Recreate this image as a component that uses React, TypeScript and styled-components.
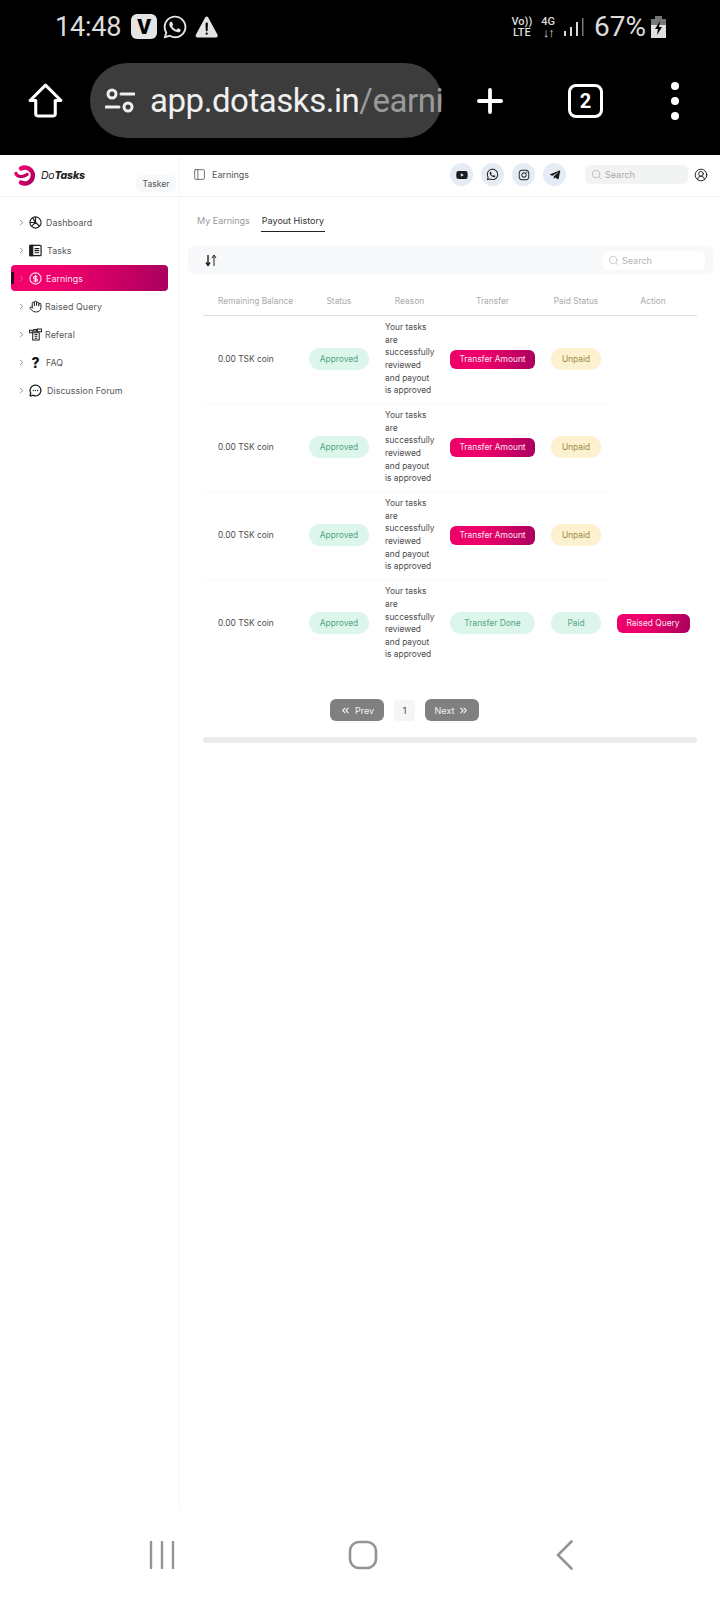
import { createGlobalStyle, styled } from "styled-components"
import type { ReactNode } from "react"
import { ChevronRight, Hand, MessageCircleMore, PanelLeft, Plus, Search, ChevronsLeft, ChevronsRight, CircleUserRound } from "lucide-react"
import { FaInstagram, FaTelegramPlane, FaWhatsapp, FaYoutube } from "react-icons/fa"
import { IoWarning } from "react-icons/io5"

const GlobalStyle = createGlobalStyle`
  html, body { margin: 0; padding: 0; background: #fff; }
  * { box-sizing: border-box; }
`

const Page = styled.div`
  width: 720px;
  height: 1600px;
  display: flex;
  flex-direction: column;
  font-family: Inter, "Noto Sans", sans-serif;
  overflow: hidden;
`

const Chrome = styled.div`
  height: 155px;
  background: #000;
  color: #fff;
  font-family: Roboto, sans-serif;
`
const StatusBar = styled.div`
  height: 63px;
  padding: 0 54px 10px 55px;
  display: flex;
  align-items: center;
  color: #dcdcdc;
`
const Clock = styled.span`
  font-size: 27px;
  letter-spacing: -0.2px;
  margin-right: 10px;
`
const VBadge = styled.span`
  width: 26px;
  height: 25px;
  border-radius: 6px;
  background: #e4e4e4;
  color: #000;
  font-weight: 900;
  font-size: 21px;
  display: flex;
  align-items: center;
  justify-content: center;
  margin-right: 5px;
`
const WarningIcon = styled(IoWarning)`
  margin-left: 5px;
`
const StatusRight = styled.div`
  margin-left: auto;
  display: flex;
  align-items: center;
`
const TinyStack = styled.span`
  display: flex;
  flex-direction: column;
  align-items: center;
  font-size: 11px;
  line-height: 11px;
  font-weight: 500;
  margin-right: 9px;
`
const Arrows = styled.span`
  font-size: 13px;
  font-weight: 700;
  letter-spacing: -1px;
`
const Percent = styled.span`
  font-size: 28px;
  margin: 0 5px 0 10px;
`
const UrlRow = styled.div`
  height: 92px;
  padding: 0 0 17px 27px;
  display: flex;
  align-items: center;
`
const HomeIcon = styled.svg`
  width: 37px;
  height: 37px;
  flex: none;
`
const UrlPill = styled.div`
  width: 352px;
  height: 75px;
  margin-left: 26px;
  border-radius: 38px;
  background: #3c3c3c;
  display: flex;
  align-items: center;
  padding-left: 15px;
  font-size: 33px;
  letter-spacing: -0.45px;
  white-space: nowrap;
  color: #f0f0f0;
`
const UrlFaded = styled.span`
  color: #9a9a9a;
`
const UrlIcon = styled.svg`
  width: 30px;
  height: 30px;
  margin-right: 15px;
  flex: none;
`
const PlusSlot = styled.div`
  margin-left: 29px;
  display: flex;
`
const TabCount = styled.div`
  width: 35px;
  height: 34px;
  margin-left: 59px;
  border: 3px solid #fff;
  border-radius: 8px;
  font-size: 20px;
  font-weight: 700;
  display: flex;
  align-items: center;
  justify-content: center;
`
const Dots = styled.div`
  margin-left: 68px;
  display: flex;
  flex-direction: column;
  gap: 7px;
  span {
    width: 8px;
    height: 8px;
    border-radius: 50%;
    background: #fff;
  }
`

const AppBody = styled.div`
  flex: 1;
  display: flex;
  min-height: 0;
  color: #444;
`
const Sidebar = styled.aside`
  width: 180px;
  flex: none;
  border-right: 1px solid #f5f5f5;
`
const SideHead = styled.div`
  height: 42px;
  border-bottom: 1px solid #f3f3f3;
  padding-left: 14px;
  display: flex;
  align-items: center;
`
const LogoText = styled.span`
  margin-left: 4px;
  font-size: 10.5px;
  font-style: italic;
  font-weight: 400;
  color: #222;
  letter-spacing: -0.2px;
  b { font-weight: 800; }
`
const RolePill = styled.span`
  margin-left: auto;
  margin-right: 3px;
  align-self: flex-end;
  margin-bottom: 4px;
  width: 40px;
  height: 17px;
  border-radius: 5px;
  background: #f7f8fa;
  font-size: 8.5px;
  display: flex;
  align-items: center;
  justify-content: center;
  color: #555;
`
const SideNav = styled.nav`
  padding: 12px 11px 0;
  display: flex;
  flex-direction: column;
  gap: 2px;
`
const NavItem = styled.div<{ $active?: boolean; $gap: number }>`
  position: relative;
  height: 26px;
  padding-left: 6px;
  border-radius: 4px;
  display: flex;
  align-items: center;
  font-size: 8.8px;
  letter-spacing: 0.1px;
  color: ${(p) => (p.$active ? "#fde6f0" : "#555")};
  background: ${(p) => (p.$active ? "linear-gradient(100deg, #f2006b 30%, #a9005f 100%)" : "transparent")};
  svg.chev {
    width: 9px;
    height: 9px;
    margin-right: 3px;
    color: ${(p) => (p.$active ? "#f78cb8" : "#555")};
  }
  .glyph {
    width: 13px;
    height: 13px;
    margin-right: ${(p) => p.$gap}px;
    color: ${(p) => (p.$active ? "#fde6f0" : "#1c1c1c")};
    flex: none;
  }
  ${(p) =>
    p.$active &&
    `&::before {
      content: "";
      position: absolute;
      left: 0;
      top: 7px;
      width: 3px;
      height: 12px;
      background: #3a0a22;
    }`}
`
const Question = styled.span`
  width: 13px;
  margin-right: 4px;
  text-align: center;
  font-size: 14px;
  font-weight: 800;
  color: #111;
`

const Main = styled.main`
  flex: 1;
  min-width: 0;
`
const TopBar = styled.header`
  height: 42px;
  border-bottom: 1px solid #f3f3f3;
  padding: 0 12px 2px 13px;
  display: flex;
  align-items: center;
  font-size: 9px;
  color: #555;
`
const PageTitle = styled.span`
  margin-left: 6px;
  margin-right: auto;
`
const Socials = styled.div`
  display: flex;
  gap: 8px;
  margin-right: 19px;
`
const Social = styled.span`
  width: 23px;
  height: 23px;
  border-radius: 50%;
  background: #e6ecf6;
  color: #1c1c1c;
  display: flex;
  align-items: center;
  justify-content: center;
`
const HeadSearch = styled.div`
  width: 103px;
  height: 19px;
  border-radius: 6px;
  background: #f2f3f3;
  display: flex;
  align-items: center;
  gap: 3px;
  padding-left: 6px;
  color: #aaa;
  font-size: 9px;
  margin-right: 6px;
`
const Tabs = styled.div`
  height: 49px;
  padding: 15px 0 0 16px;
  display: flex;
  gap: 10px;
  font-size: 9px;
`
const Tab = styled.span<{ $active?: boolean }>`
  height: 20px;
  padding: 3px 1px 0;
  color: ${(p) => (p.$active ? "#333" : "#999")};
  border-bottom: ${(p) => (p.$active ? "1px solid #222" : "none")};
`
const Toolbar = styled.div`
  height: 28px;
  margin: 0 7px 0 8px;
  padding: 0 8px 0 17px;
  border-radius: 6px;
  background: #f7f8fa;
  display: flex;
  align-items: center;
  justify-content: space-between;
`
const TableSearch = styled(HeadSearch)`
  background: #fff;
  margin-right: 0;
  color: #b4b4b4;
`
const PayoutTable = styled.table`
  width: 494px;
  margin: 14px 0 0 23px;
  border-collapse: collapse;
  table-layout: fixed;
  font-size: 8.4px;
`
const HeadCell = styled.th<{ $left?: boolean }>`
  height: 27px;
  font-weight: 400;
  color: #aaa;
  text-align: ${(p) => (p.$left ? "left" : "center")};
  padding: 0 0 0 ${(p) => (p.$left ? "15px" : "0")};
  border-bottom: 1px solid #dedede;
`
const Cell = styled.td<{ $left?: boolean; $last?: boolean }>`
  height: 88px;
  padding: 0 0 0 ${(p) => (p.$left ? "15px" : "0")};
  text-align: ${(p) => (p.$left ? "left" : "center")};
  color: #4c4c4c;
  border-bottom: ${(p) => (p.$last ? "none" : "1px solid #f9f9f9")};
`
const ReasonText = styled.div`
  width: 52px;
  margin-left: 8px;
  text-align: left;
  line-height: 12.6px;
`
const Pill = styled.span<{ $tone: "green" | "yellow"; $width: number }>`
  display: inline-flex;
  align-items: center;
  justify-content: center;
  vertical-align: middle;
  height: 22px;
  width: ${(p) => p.$width}px;
  border-radius: 11px;
  background: ${(p) => (p.$tone === "green" ? "#dcf6ec" : "#fdf2cf")};
  color: ${(p) => (p.$tone === "green" ? "#54a585" : "#a08a4c")};
`
const PinkButton = styled.span<{ $width: number }>`
  display: inline-flex;
  align-items: center;
  justify-content: center;
  vertical-align: middle;
  height: 19px;
  width: ${(p) => p.$width}px;
  border-radius: 6px;
  background: linear-gradient(100deg, #ee006a 40%, #a9005f 100%);
  color: #fde6f0;
`
const Pager = styled.div`
  margin: 32px 0 0 150px;
  display: flex;
  align-items: center;
  gap: 10px;
  font-size: 9px;
`
const PagerButton = styled.span`
  width: 54px;
  height: 22px;
  border-radius: 6px;
  background: #808080;
  color: #f2f2f2;
  display: flex;
  align-items: center;
  justify-content: center;
  gap: 4px;
`
const PageNum = styled.span`
  width: 21px;
  height: 21px;
  border-radius: 4px;
  background: #f5f5f5;
  color: #444;
  display: flex;
  align-items: center;
  justify-content: center;
`
const ScrollTrack = styled.div`
  width: 494px;
  height: 6px;
  margin: 16px 0 0 23px;
  border-radius: 3px;
  background: #e9ebec;
`

const BottomNav = styled.div`
  height: 90px;
  padding: 0 147px 0 149px;
  display: flex;
  align-items: center;
  justify-content: space-between;
  color: #949494;
  svg:nth-child(2) {
    margin-right: 5px;
  }
`

const reason = "Your tasks are successfully reviewed and payout is approved"

const NotebookIcon = () => (
  <svg className="glyph" viewBox="0 0 14 14" fill="none" stroke="currentColor" strokeWidth="1.3">
    <rect x="1" y="1.5" width="12" height="11" rx="1" />
    <path d="M1 1.5h3v11H1z" fill="currentColor" />
    <path d="M6 5h5M6 7.2h5M6 9.4h5" />
  </svg>
)
const CoinIcon = () => (
  <svg className="glyph" viewBox="0 0 14 14" fill="none" stroke="currentColor" strokeWidth="1.2">
    <circle cx="7" cy="7" r="6" />
    <path d="M7 3v8M9 5H6a1.2 1.2 0 0 0 0 2.4h2a1.2 1.2 0 0 1 0 2.4H5" />
  </svg>
)
const ReferalIcon = () => (
  <svg className="glyph" viewBox="0 0 14 14" fill="none" stroke="currentColor" strokeWidth="1.1">
    <path d="M4 5h7v8H4z" />
    <path d="M6 7h3M6 9h3M6 11h3" />
    <path d="M0.5 2.5h3v2.5h-3zM9 1h4.5v3H9zM5 1.5h3v2H5z" />
  </svg>
)
const DashIcon = () => (
  <svg className="glyph" viewBox="0 0 14 14" fill="none" stroke="currentColor" strokeWidth="1.2">
    <circle cx="7" cy="7" r="6" />
    <path d="M7 1v6l4.5 4M7 7H1M4 2 7 7 3 11" />
  </svg>
)

const navItems: { label: string; icon: ReactNode; gap: number; active?: boolean }[] = [
  { label: "Dashboard", icon: <DashIcon />, gap: 4 },
  { label: "Tasks", icon: <NotebookIcon />, gap: 5 },
  { label: "Earnings", icon: <CoinIcon />, gap: 4, active: true },
  { label: "Raised Query", icon: <Hand className="glyph" strokeWidth={1.8} />, gap: 3 },
  { label: "Referal", icon: <ReferalIcon />, gap: 3 },
  { label: "FAQ", icon: <Question>?</Question>, gap: 3 },
  { label: "Discussion Forum", icon: <MessageCircleMore className="glyph" strokeWidth={2.4} />, gap: 5 },
]

const rows = [
  { done: false },
  { done: false },
  { done: false },
  { done: true },
]

export default function App() {
  return (
    <Page>
      <GlobalStyle />
      <Chrome>
        <StatusBar>
          <Clock>14:48</Clock>
          <VBadge>V</VBadge>
          <FaWhatsapp size={26} color="#e4e4e4" />
          <WarningIcon size={28} color="#e4e4e4" />
          <StatusRight>
            <TinyStack>
              <span>Vo))</span>
              <span>LTE</span>
            </TinyStack>
            <TinyStack>
              <span>4G</span>
              <Arrows>↓↑</Arrows>
            </TinyStack>
            <svg width="20" height="20" viewBox="0 0 20 20" fill="#dcdcdc">
              <rect x="0" y="14" width="2" height="5" />
              <rect x="6" y="10" width="2" height="9" />
              <rect x="12" y="5" width="2" height="14" />
              <rect x="18" y="1" width="1.5" height="18" fill="#777" />
            </svg>
            <Percent>67%</Percent>
            <svg width="15" height="22" viewBox="0 0 15 22">
              <rect x="4" y="0" width="7" height="3" fill="#777" />
              <rect x="0" y="3" width="15" height="6" fill="#777" />
              <rect x="0" y="9" width="15" height="13" fill="#e0e0e0" />
              <path d="M9 5 4 13h3l-1 6 5-8H8z" fill="#000" />
            </svg>
          </StatusRight>
        </StatusBar>
        <UrlRow>
          <HomeIcon viewBox="0 0 36 36" fill="none" stroke="#fff" strokeWidth="3" strokeLinejoin="round">
            <path d="M18 3 33 18H27.5V31a2 2 0 0 1-2 2H10.5a2 2 0 0 1-2-2V18H3Z" />
          </HomeIcon>
          <UrlPill>
            <UrlIcon viewBox="0 0 30 30" fill="none" stroke="#f0f0f0" strokeWidth="3">
              <circle cx="7" cy="8" r="4" />
              <path d="M16 8h13M1 21h13" strokeLinecap="round" />
              <circle cx="23" cy="21" r="4" />
            </UrlIcon>
            app.dotasks.in<UrlFaded>/earni</UrlFaded>
          </UrlPill>
          <PlusSlot>
            <Plus size={38} strokeWidth={2.4} />
          </PlusSlot>
          <TabCount>2</TabCount>
          <Dots>
            <span />
            <span />
            <span />
          </Dots>
        </UrlRow>
      </Chrome>
      <AppBody>
        <Sidebar>
          <SideHead>
            <svg width="23" height="21" viewBox="0 0 23 21" fill="none">
              <defs>
                <linearGradient id="logoPink" x1="0" y1="0" x2="1" y2="1">
                  <stop offset="0" stopColor="#f2006b" />
                  <stop offset="1" stopColor="#a9005f" />
                </linearGradient>
              </defs>
              <path d="M7 3.5A8 8 0 1 1 7 17.5" stroke="url(#logoPink)" strokeWidth="4.4" strokeLinecap="round" />
              <path d="M2 8.5C3.5 12.5 9 12.5 13 9.5" stroke="url(#logoPink)" strokeWidth="3.4" strokeLinecap="round" />
            </svg>
            <LogoText>
              Do<b>Tasks</b>
            </LogoText>
            <RolePill>Tasker</RolePill>
          </SideHead>
          <SideNav>
            {navItems.map((item) => (
              <NavItem key={item.label} $active={item.active} $gap={item.gap}>
                <ChevronRight className="chev" strokeWidth={1.8} />
                {item.icon}
                {item.label}
              </NavItem>
            ))}
          </SideNav>
        </Sidebar>
        <Main>
          <TopBar>
            <PanelLeft size={13} strokeWidth={1.5} />
            <PageTitle>Earnings</PageTitle>
            <Socials>
              <Social>
                <FaYoutube size={12} />
              </Social>
              <Social>
                <FaWhatsapp size={13} />
              </Social>
              <Social>
                <FaInstagram size={12} />
              </Social>
              <Social>
                <FaTelegramPlane size={12} />
              </Social>
            </Socials>
            <HeadSearch>
              <Search size={11} strokeWidth={1.5} />
              Search
            </HeadSearch>
            <CircleUserRound size={14} strokeWidth={1.6} color="#222" />
          </TopBar>
          <Tabs>
            <Tab>My Earnings</Tab>
            <Tab $active>Payout History</Tab>
          </Tabs>
          <Toolbar>
            <svg width="12" height="13" viewBox="0 0 12 13" fill="none" stroke="#222" strokeWidth="1">
              <path d="M3 1v10M1 8.5 3 11.5 5 8.5" strokeWidth="1.4" />
              <path d="M9 12V1.5M7 4l2-3 2 3" />
            </svg>
            <TableSearch>
              <Search size={11} strokeWidth={1.5} />
              Search
            </TableSearch>
          </Toolbar>
          <PayoutTable>
            <colgroup>
              <col width="98" />
              <col width="76" />
              <col width="65" />
              <col width="101" />
              <col width="66" />
              <col width="88" />
            </colgroup>
            <thead>
              <tr>
                <HeadCell $left>Remaining Balance</HeadCell>
                <HeadCell>Status</HeadCell>
                <HeadCell>Reason</HeadCell>
                <HeadCell>Transfer</HeadCell>
                <HeadCell>Paid Status</HeadCell>
                <HeadCell>Action</HeadCell>
              </tr>
            </thead>
            <tbody>
              {rows.map((row, i) => (
                <tr key={i}>
                  <Cell $left $last={row.done}>0.00 TSK coin</Cell>
                  <Cell $last={row.done}>
                    <Pill $tone="green" $width={60}>Approved</Pill>
                  </Cell>
                  <Cell $last={row.done}>
                    <ReasonText>{reason}</ReasonText>
                  </Cell>
                  <Cell $last={row.done}>
                    {row.done ? (
                      <Pill $tone="green" $width={85}>Transfer Done</Pill>
                    ) : (
                      <PinkButton $width={85}>Transfer Amount</PinkButton>
                    )}
                  </Cell>
                  <Cell $last={row.done}>
                    <Pill $tone={row.done ? "green" : "yellow"} $width={50}>
                      {row.done ? "Paid" : "Unpaid"}
                    </Pill>
                  </Cell>
                  {row.done && (
                    <Cell $last>
                      <PinkButton $width={73}>Raised Query</PinkButton>
                    </Cell>
                  )}
                </tr>
              ))}
            </tbody>
          </PayoutTable>
          <Pager>
            <PagerButton>
              <ChevronsLeft size={11} strokeWidth={2.4} />
              Prev
            </PagerButton>
            <PageNum>1</PageNum>
            <PagerButton>
              Next
              <ChevronsRight size={11} strokeWidth={2.4} />
            </PagerButton>
          </Pager>
          <ScrollTrack />
        </Main>
      </AppBody>
      <BottomNav>
        <svg width="26" height="28" viewBox="0 0 26 28" stroke="currentColor" strokeWidth="2.4" strokeLinecap="round">
          <path d="M2 1v26M13 1v26M24 1v26" />
        </svg>
        <svg width="30" height="30" viewBox="0 0 30 30" fill="none" stroke="currentColor" strokeWidth="2.6">
          <rect x="2" y="2" width="26" height="26" rx="9" />
        </svg>
        <svg width="17" height="30" viewBox="0 0 17 30" fill="none" stroke="currentColor" strokeWidth="2.6" strokeLinecap="round">
          <path d="M15.5 1.5 2 15l13.5 13.5" />
        </svg>
      </BottomNav>
    </Page>
  )
}
